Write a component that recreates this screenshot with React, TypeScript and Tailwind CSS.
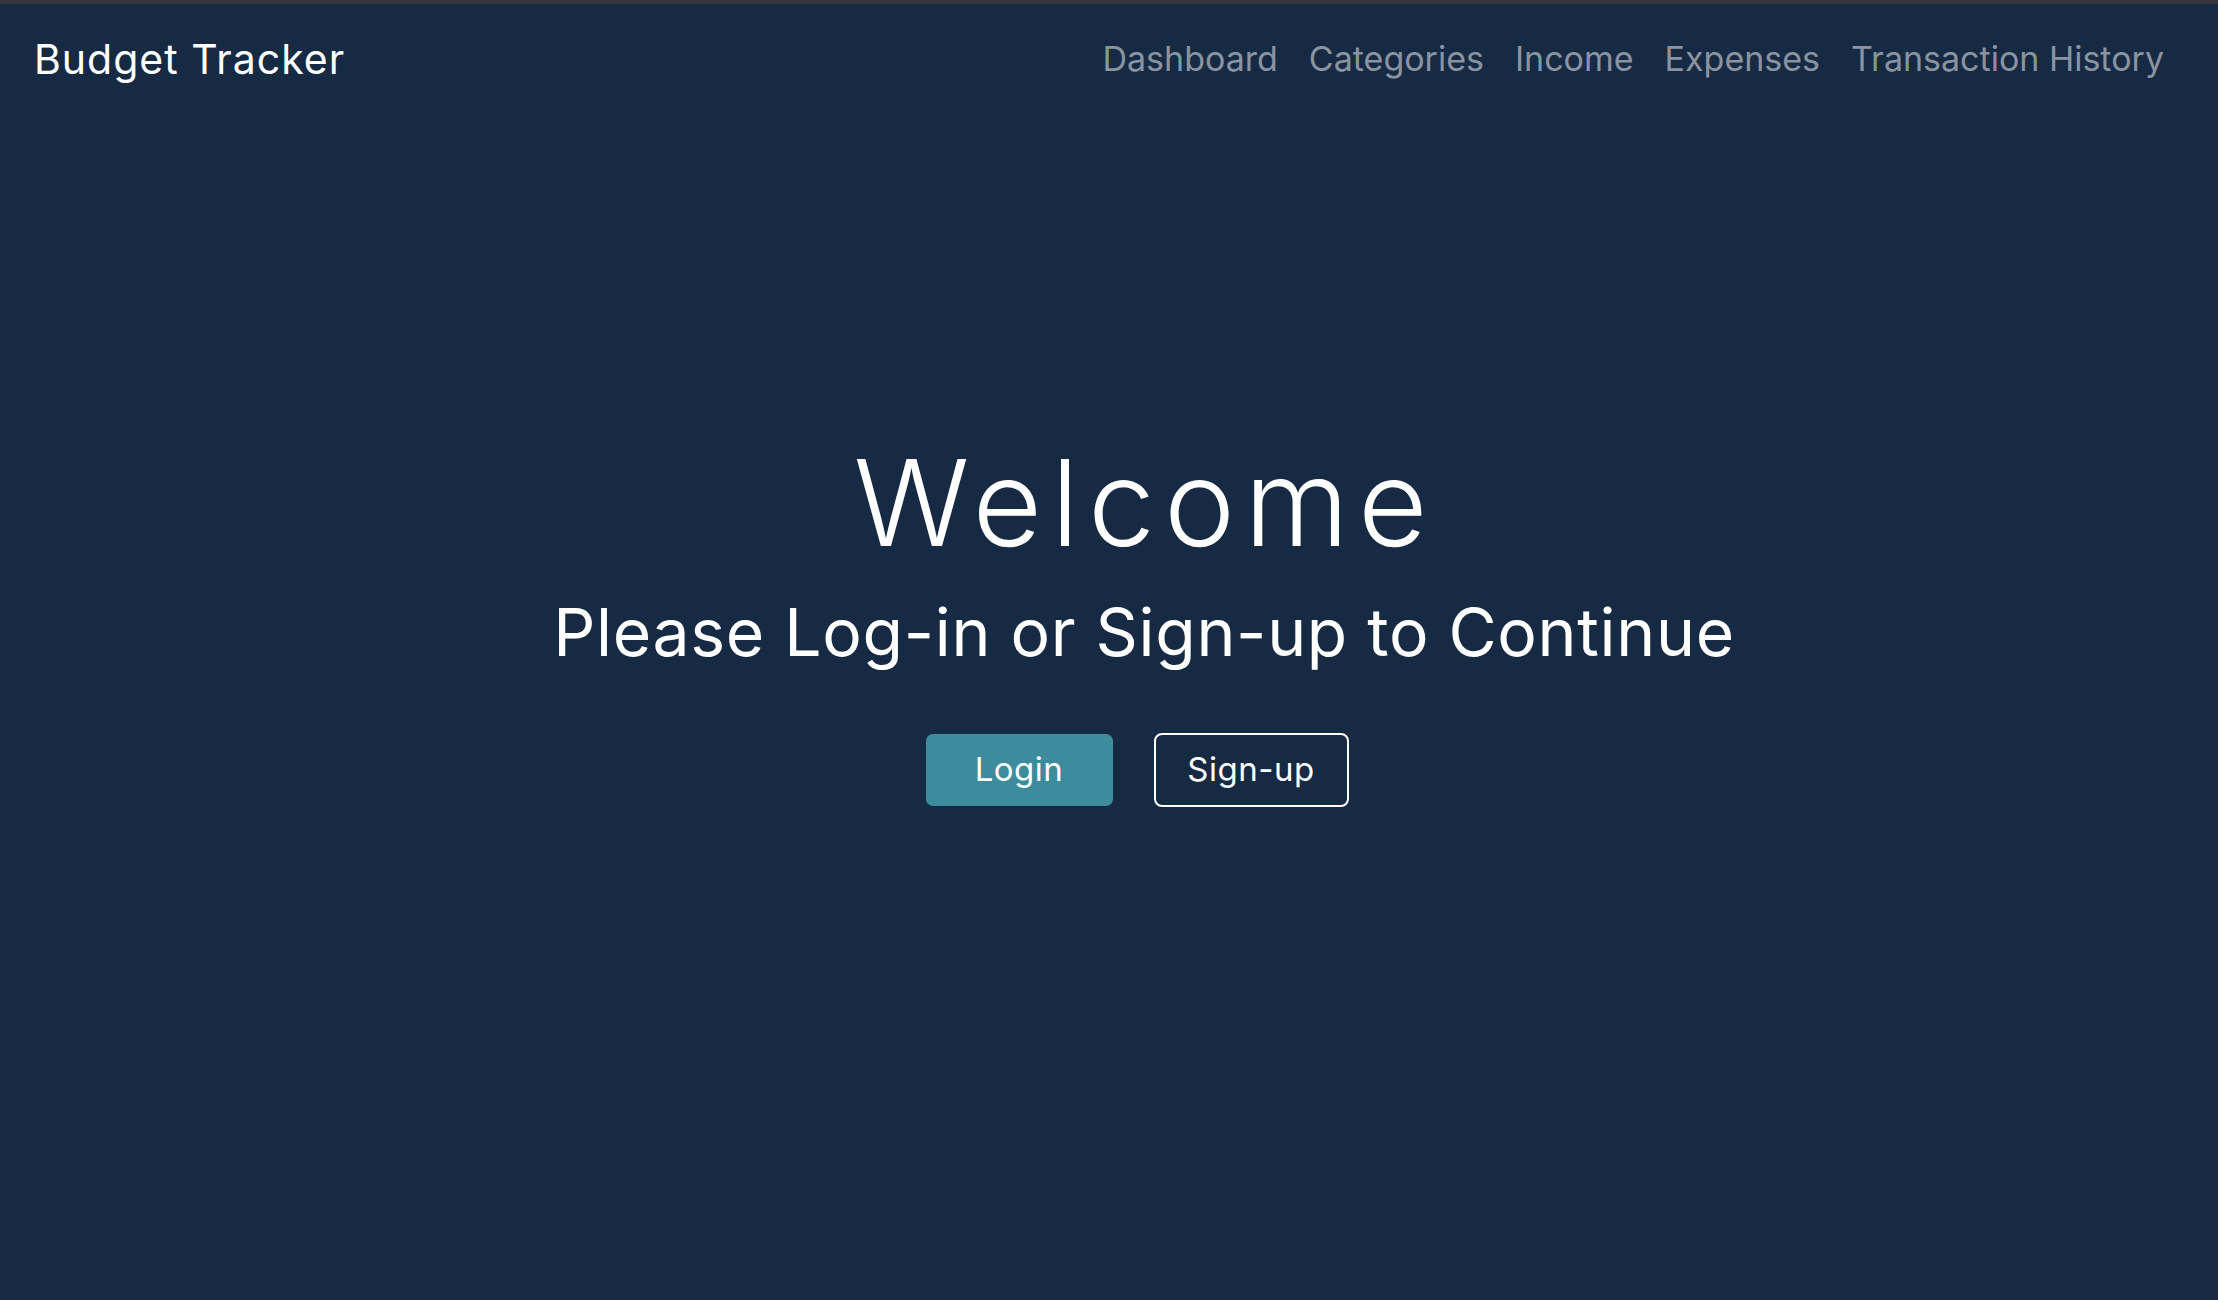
export default function App() {
  const links = ["Dashboard", "Categories", "Income", "Expenses", "Transaction History"];
  return (
    <div className="min-h-screen bg-[#172a43] border-t-4 border-[#33363f] text-white font-['Inter','Liberation_Sans',sans-serif]">
      <header className="h-[110px] flex items-center justify-between pl-[34px] pr-[54px]">
        <a className="text-[41px] leading-none tracking-[1px]">Budget Tracker</a>
        <nav className="flex items-center gap-[31px]">
          {links.map(l => (
            <a key={l} className="text-[34px] leading-none text-[#8a93a1]">{l}</a>
          ))}
        </nav>
      </header>

      <main className="flex flex-col items-center pt-[329px] pl-[70px]">
        <h1 className="text-[120px] leading-none font-light tracking-[9px] pl-[2px]">Welcome</h1>
        <p className="mt-[36px] text-[66px] leading-none tracking-[0.7px]">Please Log-in or Sign-up to Continue</p>
        <div className="mt-[68px] mr-[14px] flex items-center gap-[41px]">
          <button className="w-[187px] h-[72px] rounded-[7px] bg-[#3d8c9e] text-[33px] tracking-[0.5px]">Login</button>
          <button className="w-[195px] h-[74px] rounded-[8px] border-2 border-white text-[33px] tracking-[0.5px]">Sign-up</button>
        </div>
      </main>
    </div>
  );
}
